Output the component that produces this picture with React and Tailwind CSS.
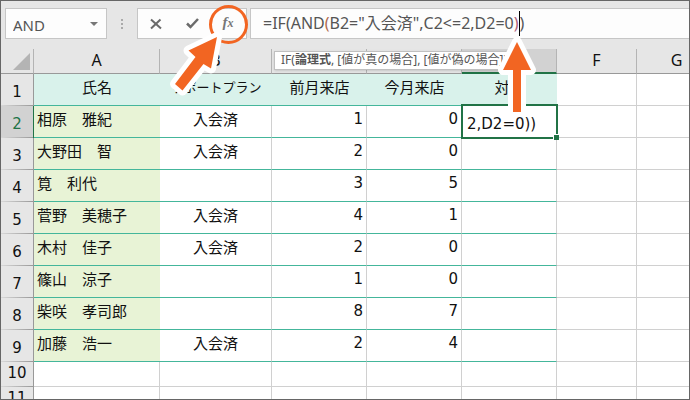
const columns = [
  { name: 'A', width: 'w-[126px]' },
  { name: 'B', width: 'w-[112px]' },
  { name: 'C', width: 'w-[95px]' },
  { name: 'D', width: 'w-[95px]' },
  { name: 'E', width: 'w-[95px]', active: true },
  { name: 'F', width: 'w-[80px]' },
  { name: 'G', width: 'w-[80px]' },
];

const members = [
  { row: 2, name: '相原　雅紀', plan: '入会済', last: 1, current: 0 },
  { row: 3, name: '大野田　智', plan: '入会済', last: 2, current: 0 },
  { row: 4, name: '筧　利代', plan: '', last: 3, current: 5 },
  { row: 5, name: '菅野　美穂子', plan: '入会済', last: 4, current: 1 },
  { row: 6, name: '木村　佳子', plan: '入会済', last: 2, current: 0 },
  { row: 7, name: '篠山　涼子', plan: '', last: 1, current: 0 },
  { row: 8, name: '柴咲　孝司郎', plan: '', last: 8, current: 7 },
  { row: 9, name: '加藤　浩一', plan: '入会済', last: 2, current: 4 },
];

const titles = ['氏名', 'サポートプラン', '前月来店', '今月来店', '対象'];

const headCell = 'border-r border-r-[#b4b4b4] p-0 font-normal text-base leading-5';
const mint = 'border-b border-[#44b69b] bg-[#d9f2eb] p-0 pb-1.5 font-normal';
const lined = 'border-r border-r-[#d0d0d0] border-b border-b-[#44b69b] p-0 pb-1.5';
const plain = 'border-r border-b border-[#d0d0d0] p-0';
const digits = "font-['DejaVu_Sans',sans-serif]";

function RowHead({ n, active }) {
  return (
    <th
      scope="row"
      className={`${digits} border-r p-0 pb-1 align-bottom text-[15px] font-normal leading-5 bg-[linear-gradient(to_right,#d8d8d8,#999)] bg-[length:100%_1px] bg-bottom bg-no-repeat ${
        active ? 'border-[#217346] bg-[#d2d2d2] text-[#217346]' : 'border-[#999] bg-[#e6e6e6]'
      }`}
    >
      {n}
    </th>
  );
}

function FormulaBar() {
  return (
    <div className="flex gap-[3px] pt-[7px] pb-[10px] pl-1 text-[#444]">
      <div className="flex h-[31px] w-[102px] shrink-0 items-center border border-[#c6c6c6] bg-[#fdfdfd] pl-[7px] pr-1">
        <input
          aria-label="名前ボックス"
          defaultValue="AND"
          className="h-full w-full min-w-0 bg-transparent pt-0.5 text-[15px] text-[#555] outline-none"
        />
        <button aria-label="名前の一覧" className="flex h-5 w-4 shrink-0 items-center justify-center">
          <svg width="8" height="4" viewBox="0 0 8 4" fill="#777">
            <path d="M0 0h8L4 4z" />
          </svg>
        </button>
      </div>
      <div className="flex w-6 shrink-0 flex-col items-center justify-center gap-[2px]">
        <span className="h-[2px] w-[2px] bg-[#aaa]" />
        <span className="h-[2px] w-[2px] bg-[#aaa]" />
        <span className="h-[2px] w-[2px] bg-[#aaa]" />
      </div>
      <div className="flex h-[31px] w-[110px] shrink-0 items-center border border-[#c6c6c6] bg-[#fdfdfd]">
        <button aria-label="キャンセル" className="flex flex-1 justify-center">
          <svg width="12" height="12" viewBox="0 0 12 12" fill="none" stroke="#6b6b6b" strokeWidth="2">
            <path d="M1 1.500 11 10.500M10.500 1.500 1 10.500" />
          </svg>
        </button>
        <button aria-label="入力" className="flex flex-1 justify-center">
          <svg width="13" height="11" viewBox="0 0 13 11" fill="none" stroke="#6b6b6b" strokeWidth="2.5">
            <path d="M1 5.500 4.500 9 12 1" />
          </svg>
        </button>
        <button aria-label="関数の挿入" className="flex-1 pb-0.5 text-center font-['Liberation_Serif',serif] text-[15px] font-bold italic leading-5 text-[#777]">
          f<span className="text-[12px]">x</span>
        </button>
      </div>
      <div className="h-[31px] min-w-0 flex-1 border border-r-0 border-[#c6c6c6] bg-[#fdfdfd] pl-3 text-base leading-7">
        <div className="flex whitespace-nowrap text-[#555]">
          =IF(AND<span className="text-[#b06a50]">(</span>B2="入会済",C2&lt;=2,D2=0<span className="text-[#b0607a]">)</span>
          <span className="mt-[2px] h-[25px] w-px bg-black" />)
        </div>
      </div>
    </div>
  );
}

function Annotations() {
  return (
    <svg className="pointer-events-none absolute left-0 top-0" width="560" height="130" viewBox="1 1 560 130">
      <circle cx="228.500" cy="24.500" r="18" fill="none" stroke="#f26522" strokeWidth="3" />
      <g fill="#f26522" stroke="#fff" strokeWidth="10" strokeLinejoin="round" paintOrder="stroke">
        <path d="M217 37 188.500 50.500 195.500 57 175 84 182.500 90.500 203.500 64 211 68.500z" />
        <path d="M517 42 503 70H513V112H521V70H531z" />
      </g>
    </svg>
  );
}

export default function App() {
  return (
    <main className="relative h-screen w-full overflow-hidden border border-[#666] bg-[#e6e6e6] font-['Noto_Sans','Noto_Sans_CJK_JP',sans-serif] text-[#111]">
      <FormulaBar />
      <div className="relative">
        <table className="w-[716px] min-w-full table-fixed border-separate border-spacing-0 bg-white text-[15px] leading-5">
          <colgroup>
            <col className="w-[33px]" />
            {columns.map((c) => (
              <col key={c.name} className={c.width} />
            ))}
          </colgroup>
          <thead>
            <tr className="h-[25px]">
              <th className={`${headCell} border-b border-b-[#999] bg-[#e6e6e6]`} aria-label="すべて選択">
                <svg className="ml-auto mr-[3px]" width="17" height="17" viewBox="0 0 17 17" fill="#b4b4b4">
                  <path d="M17 0V17H0z" />
                </svg>
              </th>
              {columns.map((c) => (
                <th
                  key={c.name}
                  scope="col"
                  className={`${headCell} pb-0.5 ${
                    c.active ? 'border-b-2 border-b-[#217346] bg-[#d2d2d2]' : 'border-b border-b-[#999] bg-[#e6e6e6]'
                  }`}
                >
                  {c.name}
                </th>
              ))}
            </tr>
          </thead>
          <tbody>
            <tr className="h-8">
              <RowHead n={1} />
              {titles.map((t, i) => (
                <th key={t} scope="col" className={`${mint} whitespace-nowrap ${i === 1 ? 'text-[13px]' : ''}`}>
                  {t}
                </th>
              ))}
              <td className={plain} />
              <td className={plain} />
            </tr>
            {members.map((m) => (
              <tr key={m.row} className="h-8">
                <RowHead n={m.row} active={m.row === 2} />
                <td className="border-b border-[#44b69b] bg-[#e8f3d6] p-0 pb-1.5 pl-[3px]">{m.name}</td>
                <td className={`${lined} text-center`}>{m.plan}</td>
                <td className={`${lined} ${digits} pr-[3px] text-right`}>{m.last}</td>
                <td className={`${lined} ${digits} pr-[3px] text-right`}>{m.current}</td>
                <td className={lined} />
                <td className={plain} />
                <td className={plain} />
              </tr>
            ))}
            {[10, 11].map((n) => (
              <tr key={n} className="h-[25px]">
                <RowHead n={n} />
                {columns.map((c) => (
                  <td key={c.name} className={plain} />
                ))}
              </tr>
            ))}
          </tbody>
        </table>

        {/* cell being edited */}
        <div className={`${digits} absolute left-[460px] top-[55px] h-[35px] w-[97px] border-2 border-[#217346] bg-white pl-1 pt-[6px] text-[15px] leading-6`}>
          2,D2=0))
          <span className="absolute -bottom-[3px] -right-[3px] h-[6px] w-[6px] border-l border-t border-white bg-[#217346]" />
        </div>

        {/* argument hint */}
        <div className="absolute left-[273px] top-[2px] h-[19px] whitespace-nowrap border border-[#c0c0c0] bg-white px-[6px] text-[12px] leading-4 text-[#555] shadow">
          IF(<b>論理式</b>, [値が真の場合], [値が偽の場合])
        </div>
      </div>
      <Annotations />
    </main>
  );
}
